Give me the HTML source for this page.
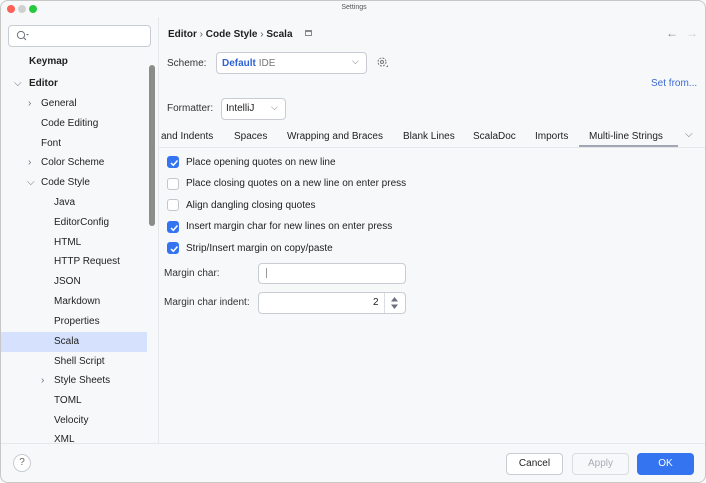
<!DOCTYPE html>
<html><head><style>
*{box-sizing:border-box;margin:0;padding:0}
body{width:706px;height:483px;overflow:hidden;font-family:"Liberation Sans",sans-serif;font-size:10px;color:#1f1f1f;background:#f7f8fa;position:relative}
.abs{position:absolute;white-space:nowrap}
.win{position:absolute;left:0;top:0;width:706px;height:483px;border:1px solid #c8c8c8;border-radius:8px;overflow:hidden;background:#f7f8fa}
.tree div{position:absolute;white-space:nowrap;font-size:10px}
.cb{position:absolute;width:12px;height:12px;border-radius:3px;border:1px solid #c4c6cc;background:#fff}
.cb.on{background:#3574f0;border-color:#3574f0}
.cb.on svg{position:absolute;left:1px;top:1px}
.chev{color:#6c707e}
</style></head><body><div class="win">
<div class="abs" style="left:6px;top:4px;width:8px;height:8px;border-radius:50%;background:#fe5f57"></div>
<div class="abs" style="left:17px;top:4px;width:8px;height:8px;border-radius:50%;background:#d0d0d0"></div>
<div class="abs" style="left:28px;top:4px;width:8px;height:8px;border-radius:50%;background:#28c840"></div>
<div class="abs" style="left:0;top:3px;width:706px;text-align:center;font-size:7px;color:#555">Settings</div>
<div class="abs" style="left:157px;top:16px;width:1px;height:427px;background:#e6e7ea"></div>
<div class="abs" style="left:7px;top:24px;width:143px;height:22px;border:1px solid #c9ccd2;border-radius:4px;background:#fff"></div>
<svg class="abs" style="left:15px;top:29px" width="14" height="12"><circle cx="5" cy="5" r="3.6" fill="none" stroke="#6c707e" stroke-width="1"/><path d="M7.6 7.6L10 10" stroke="#6c707e"/><path d="M10 4l1.5 1.5L13 4z" fill="#6c707e"/></svg>
<div class="tree">
<div style="left:28px;top:55px;font-weight:bold">Keymap</div>
<div class="chev" style="left:13px;top:77px">⌵</div>
<div style="left:28px;top:77px;font-weight:bold">Editor</div>
<div class="chev" style="left:27px;top:97px">›</div>
<div style="left:40px;top:97px">General</div>
<div style="left:40px;top:117px">Code Editing</div>
<div style="left:40px;top:137px">Font</div>
<div class="chev" style="left:27px;top:156px">›</div>
<div style="left:40px;top:156px">Color Scheme</div>
<div class="chev" style="left:26px;top:176px">⌵</div>
<div style="left:40px;top:176px">Code Style</div>
<div style="left:53px;top:196px">Java</div>
<div style="left:53px;top:216px">EditorConfig</div>
<div style="left:53px;top:236px">HTML</div>
<div style="left:53px;top:255px">HTTP Request</div>
<div style="left:53px;top:275px">JSON</div>
<div style="left:53px;top:295px">Markdown</div>
<div style="left:53px;top:315px">Properties</div>
</div>
<div class="abs" style="left:0;top:331px;width:146px;height:20px;background:#d5e1fd"></div>
<div class="tree">
<div style="left:53px;top:335px">Scala</div>
<div style="left:53px;top:355px">Shell Script</div>
<div class="chev" style="left:40px;top:374px">›</div>
<div style="left:53px;top:374px">Style Sheets</div>
<div style="left:53px;top:394px">TOML</div>
<div style="left:53px;top:414px">Velocity</div>
<div style="left:53px;top:433px;height:9px;overflow:hidden">XML</div>
</div>
<div class="abs" style="left:148px;top:64px;width:6px;height:161px;border-radius:3px;background:#8c8c8c"></div>
<div class="abs" style="left:167px;top:28px;font-weight:bold">Editor <span style="font-weight:normal;color:#555">›</span> Code Style <span style="font-weight:normal;color:#555">›</span> Scala</div>
<div class="abs" style="left:304px;top:29px;width:7px;height:6px;border:1px solid #888;border-top-width:2px"></div>
<div class="abs" style="left:665px;top:25px;color:#888;font-size:12px">←</div>
<div class="abs" style="left:685px;top:25px;color:#ccc;font-size:12px">→</div>
<div class="abs" style="left:166px;top:57px;color:#333">Scheme:</div>
<div class="abs" style="left:215px;top:51px;width:151px;height:22px;border:1px solid #c9ccd2;border-radius:4px;background:#fff"></div>
<div class="abs" style="left:221px;top:57px"><b style="color:#2f63d6">Default</b> <span style="color:#777">IDE</span></div>
<div class="abs chev" style="left:351px;top:55px;font-size:9px">⌵</div>
<svg class="abs" style="left:375px;top:55px" width="14" height="14"><circle cx="6" cy="6" r="4" fill="none" stroke="#777" stroke-dasharray="2 1.2"/><circle cx="6" cy="6" r="1.5" fill="none" stroke="#777"/><path d="M10 11l2-2v2z" fill="#777"/></svg>
<div class="abs" style="left:650px;top:77px;color:#3c6bd1">Set from...</div>
<div class="abs" style="left:166px;top:102px;color:#333">Formatter:</div>
<div class="abs" style="left:220px;top:97px;width:65px;height:22px;border:1px solid #c9ccd2;border-radius:4px;background:#fff"></div>
<div class="abs" style="left:225px;top:102px">IntelliJ</div>
<div class="abs chev" style="left:270px;top:101px;font-size:9px">⌵</div>
<div class="abs" style="left:158px;top:146px;width:548px;height:1px;background:#e6e7ea"></div>
<div class="abs" style="left:160px;top:130px">and Indents</div>
<div class="abs" style="left:233px;top:130px">Spaces</div>
<div class="abs" style="left:286px;top:130px">Wrapping and Braces</div>
<div class="abs" style="left:402px;top:130px">Blank Lines</div>
<div class="abs" style="left:472px;top:130px">ScalaDoc</div>
<div class="abs" style="left:534px;top:130px">Imports</div>
<div class="abs" style="left:588px;top:130px">Multi-line Strings</div>
<div class="abs" style="left:578px;top:144px;width:99px;height:2px;background:#a3a7b3"></div>
<div class="abs chev" style="left:684px;top:128px">⌵</div>
<div class="cb on" style="left:166px;top:155px"><svg width="10" height="10"><path d="M2 5l2.3 2.3L8.5 2.5" stroke="#fff" stroke-width="1.5" fill="none"/></svg></div>
<div class="abs" style="left:185px;top:156px">Place opening quotes on new line</div>
<div class="cb" style="left:166px;top:177px"></div>
<div class="abs" style="left:185px;top:177px">Place closing quotes on a new line on enter press</div>
<div class="cb" style="left:166px;top:198px"></div>
<div class="abs" style="left:185px;top:199px">Align dangling closing quotes</div>
<div class="cb on" style="left:166px;top:220px"><svg width="10" height="10"><path d="M2 5l2.3 2.3L8.5 2.5" stroke="#fff" stroke-width="1.5" fill="none"/></svg></div>
<div class="abs" style="left:185px;top:220px">Insert margin char for new lines on enter press</div>
<div class="cb on" style="left:166px;top:241px"><svg width="10" height="10"><path d="M2 5l2.3 2.3L8.5 2.5" stroke="#fff" stroke-width="1.5" fill="none"/></svg></div>
<div class="abs" style="left:185px;top:242px">Strip/Insert margin on copy/paste</div>
<div class="abs" style="left:163px;top:267px;color:#333">Margin char:</div>
<div class="abs" style="left:257px;top:262px;width:148px;height:21px;border:1px solid #c9ccd2;border-radius:4px;background:#fff"></div>
<div class="abs" style="left:265px;top:267px;width:1px;height:10px;background:#999"></div>
<div class="abs" style="left:163px;top:296px;color:#333">Margin char indent:</div>
<div class="abs" style="left:257px;top:291px;width:148px;height:22px;border:1px solid #c9ccd2;border-radius:4px;background:#fff"></div>
<div class="abs" style="left:372px;top:296px">2</div>
<div class="abs" style="left:383px;top:292px;width:1px;height:20px;background:#dcdde0"></div>
<svg class="abs" style="left:389px;top:296px" width="9" height="12"><path d="M4.5 0L8 4.5H1z M4.5 12L8 7.5H1z" fill="#6c707e"/></svg>
<div class="abs" style="left:0;top:442px;width:706px;height:1px;background:#e6e7ea"></div>
<div class="abs" style="left:12px;top:453px;width:18px;height:18px;border:1px solid #c9ccd2;border-radius:50%;background:#fff;text-align:center;line-height:16px;color:#666;font-size:10px">?</div>
<div class="abs" style="left:505px;top:452px;width:57px;height:22px;border:1px solid #c9ccd2;border-radius:4px;background:#fff;text-align:center;line-height:20px">Cancel</div>
<div class="abs" style="left:571px;top:452px;width:57px;height:22px;border:1px solid #dcdde0;border-radius:4px;background:#f7f8fa;text-align:center;line-height:20px;color:#a8adb7">Apply</div>
<div class="abs" style="left:636px;top:452px;width:57px;height:22px;border-radius:4px;background:#3574f0;text-align:center;line-height:22px;color:#fff">OK</div>
</div></body></html>
